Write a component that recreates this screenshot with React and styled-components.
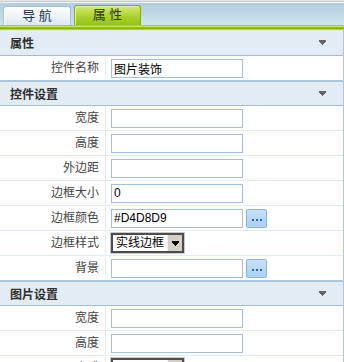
import React from "react";
import styled, { createGlobalStyle } from "styled-components";

const GlobalStyle = createGlobalStyle`
  html, body {
    margin: 0;
    padding: 0;
    overflow: hidden;
    background: #fff;
    font-family: "Liberation Sans", "Noto Sans CJK SC", sans-serif;
    font-size: 12px;
  }
`;

const TabBar = styled.div`
  display: flex;
  align-items: flex-end;
  gap: 3px;
  height: 25px;
  padding-left: 3px;
  background: linear-gradient(
    #e4e7ea 0,
    #e4e7ea 1px,
    #c3ccd4 1px,
    #c3ccd4 2px,
    #f2f6f8 2px,
    #f2f6f8 3px,
    #b3cde0 3px,
    #cce4ea 100%
  );
`;

const Tab = styled.div`
  box-sizing: border-box;
  width: ${(p) => (p.$active ? "67px" : "68px")};
  height: ${(p) => (p.$active ? "20px" : "19px")};
  border: 1px solid ${(p) => (p.$active ? "#86ad12" : "#a9bfd2")};
  border-bottom: none;
  border-radius: 3px 3px 0 0;
  background: ${(p) =>
    p.$active
      ? "linear-gradient(#d3ec70, #a8d02c 60%, #96c21a)"
      : "linear-gradient(#ffffff, #dce8f2)"};
  box-shadow: inset 1px 1px 0 ${(p) => (p.$active ? "#e2f49a" : "#ffffff")};
  color: ${(p) => (p.$active ? "#2b3b0c" : "#1b3651")};
  font-size: 13px;
  line-height: 18px;
  text-align: center;
  white-space: pre;
`;

const GreenBar = styled.div`
  height: 4px;
  background: linear-gradient(
    #a8d42a 0,
    #a8d42a 1px,
    #c6ea4c 1px,
    #c6ea4c 2px,
    #98c31c 2px,
    #86b00c 100%
  );
`;

const Panel = styled.div`
  border-right: 1px solid #b3c5d7;
`;

const Header = styled.div`
  display: flex;
  align-items: center;
  justify-content: space-between;
  height: ${(p) => (p.$first ? "25px" : "23px")};
  padding: 0 17px 0 10px;
  background: #e3ebf4;
  border-top: ${(p) => (p.$first ? "1px solid #a9b6c3" : "2px solid #abc6e0")};
  border-bottom: 1px solid #a6bcd4;
  color: #2e2e2e;
  font-weight: bold;
  font-size: 12px;
`;

const Row = styled.div`
  display: grid;
  grid-template-columns: 106px 1fr;
  height: 24px;
  & + & {
    border-top: 1px solid #e3eaf2;
  }
`;

const Label = styled.div`
  box-sizing: border-box;
  padding-right: 6px;
  border-right: 1px solid #e3eaf2;
  text-align: right;
  line-height: 24px;
  color: #444;
`;

const Value = styled.div`
  display: flex;
  align-items: center;
  padding-left: 5px;
`;

const Input = styled.input`
  box-sizing: border-box;
  width: 132px;
  height: 19px;
  margin: 0;
  padding: 0 2px;
  border: 1px solid #a5bfd8;
  background: #fff;
  font-family: "Liberation Sans", "Noto Sans CJK SC", sans-serif;
  font-size: 12px;
  color: #000;
  outline: none;
`;

const PickButton = styled.div`
  box-sizing: border-box;
  display: flex;
  align-items: center;
  justify-content: center;
  gap: 2px;
  width: 21px;
  height: 19px;
  margin-left: 3px;
  padding-top: 3px;
  border: 1px solid #8ab2da;
  border-radius: 2px;
  background: linear-gradient(#c4e1fc, #a9d1f6);
`;

const Dot = styled.span`
  width: 2px;
  height: 2px;
  background: #3466a8;
`;

const SelectBox = styled.div`
  box-sizing: border-box;
  display: flex;
  width: 73px;
  height: 20px;
  border: 2px solid #4c4c4c;
  box-shadow: 0 0 0 1px #c9c9c9;
  background: #fff;
`;

const SelectText = styled.div`
  flex: 1;
  padding-left: 3px;
  line-height: 16px;
  color: #000;
  white-space: nowrap;
  overflow: hidden;
`;

const SelectArrow = styled.div`
  box-sizing: border-box;
  display: flex;
  align-items: center;
  justify-content: center;
  width: 15px;
  background: #d4d0c8;
  border-left: 1px solid #f4f4f4;
`;

const DownArrow = ({ color }) => (
  <svg width="7" height="5" viewBox="0 0 7 5" fill={color}>
    <rect x="0" y="0" width="7" height="2" />
    <rect x="1" y="2" width="5" height="1" />
    <rect x="2" y="3" width="3" height="1" />
    <rect x="3" y="4" width="1" height="1" />
  </svg>
);

const sections = [
  {
    title: "属性",
    rows: [{ label: "控件名称", type: "input", value: "图片装饰" }],
  },
  {
    title: "控件设置",
    rows: [
      { label: "宽度", type: "input" },
      { label: "高度", type: "input" },
      { label: "外边距", type: "input" },
      { label: "边框大小", type: "input", value: "0" },
      { label: "边框颜色", type: "input", value: "#D4D8D9", pick: true },
      { label: "边框样式", type: "select", value: "实线边框" },
      { label: "背景", type: "input", pick: true },
    ],
  },
  {
    title: "图片设置",
    rows: [
      { label: "宽度", type: "input" },
      { label: "高度", type: "input" },
      { label: "显示方式", type: "select", value: "" },
    ],
  },
];

const Field = ({ row }) => {
  if (row.type === "select") {
    return (
      <SelectBox>
        <SelectText>{row.value}</SelectText>
        <SelectArrow>
          <DownArrow color="#000" />
        </SelectArrow>
      </SelectBox>
    );
  }
  return (
    <>
      <Input readOnly defaultValue={row.value || ""} />
      {row.pick && (
        <PickButton>
          <Dot />
          <Dot />
          <Dot />
        </PickButton>
      )}
    </>
  );
};

const App = () => {
  return (
    <>
      <GlobalStyle />
      <TabBar>
        <Tab>导 航</Tab>
        <Tab $active>属 性</Tab>
      </TabBar>
      <GreenBar />
      <Panel>
        {sections.map((s, i) => (
          <div key={s.title}>
            <Header $first={i === 0}>
              <span>{s.title}</span>
              <DownArrow color="#666" />
            </Header>
            {s.rows.map((r) => (
              <Row key={r.label}>
                <Label>{r.label}</Label>
                <Value>
                  <Field row={r} />
                </Value>
              </Row>
            ))}
          </div>
        ))}
      </Panel>
    </>
  );
};

export default App;
